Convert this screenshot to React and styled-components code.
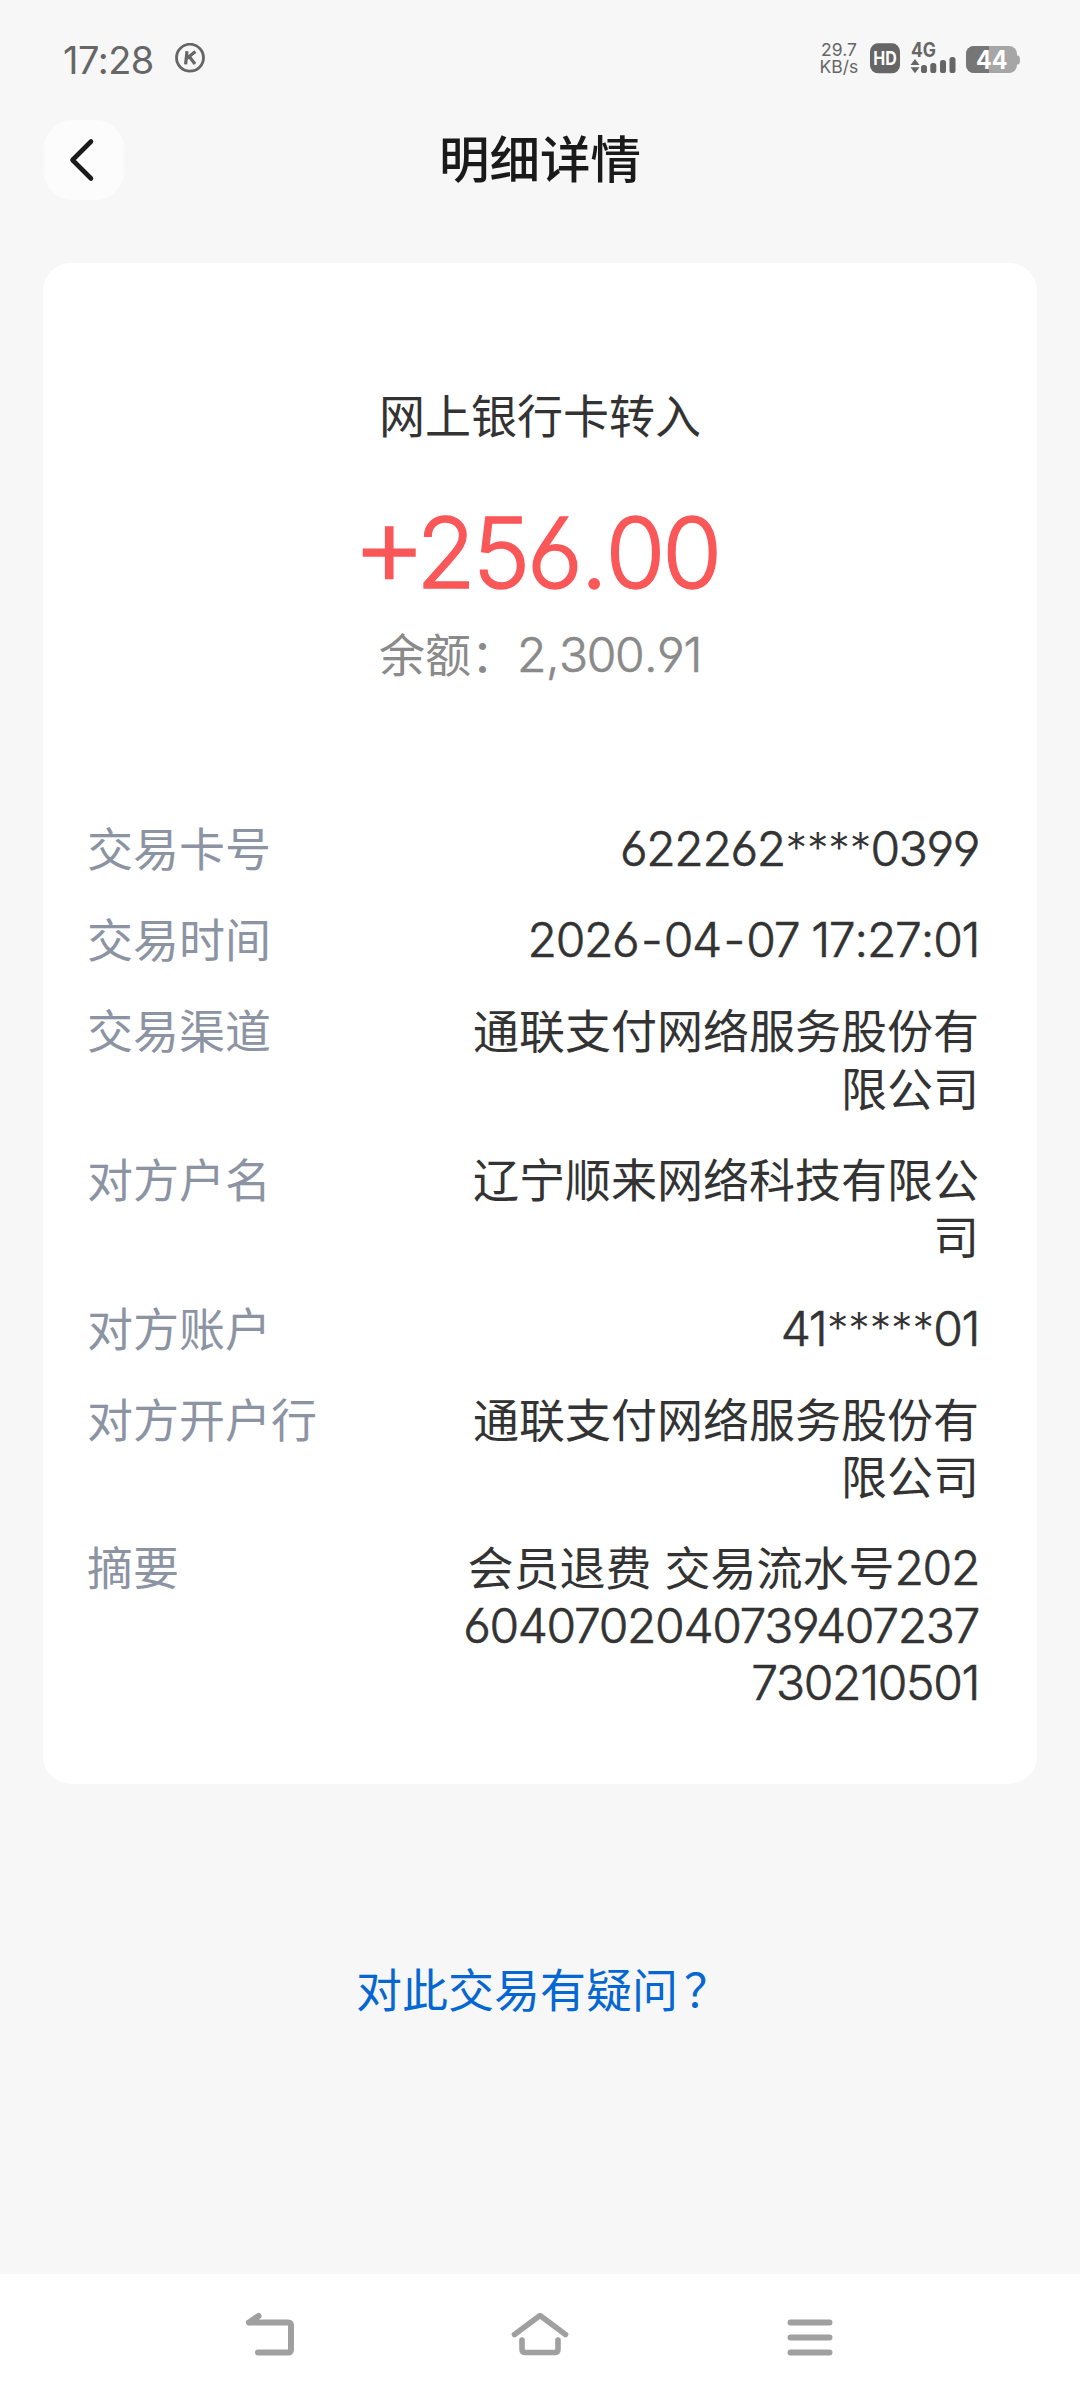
import React from 'react';
import styled, { createGlobalStyle } from 'styled-components';

const GlobalStyle = createGlobalStyle`
  * {
    box-sizing: border-box;
  }
  body {
    margin: 0;
    background: #f7f7f7;
    font-family: Inter, 'Noto Sans CJK SC', sans-serif;
  }
`;

const Screen = styled.div`
  width: 1080px;
  height: 2400px;
  display: flex;
  flex-direction: column;
  overflow: hidden;
`;

const StatusBar = styled.div`
  height: 116px;
  flex-shrink: 0;
  padding: 0 59px 0 63px;
  display: flex;
  align-items: center;
  justify-content: space-between;
  color: #666;
`;

const StatusGroup = styled.div`
  display: flex;
  align-items: center;
`;

const Clock = styled.span`
  width: 112px;
  margin-top: 4px;
  font-size: 38px;
  line-height: 44px;
  letter-spacing: -0.5px;
  white-space: nowrap;
`;

const NetSpeed = styled.div`
  width: 50px;
  margin-right: 5px;
  display: flex;
  flex-direction: column;
  align-items: center;
  font-size: 17.5px;
  line-height: 17px;
`;

const StatusSvg = styled.svg`
  overflow: visible;
`;

const Header = styled.header`
  height: 88px;
  flex-shrink: 0;
  padding: 0 44px;
  display: grid;
  grid-template-columns: 80px 1fr 80px;
  align-items: center;
`;

const BackButton = styled.button`
  width: 80px;
  height: 80px;
  padding: 0;
  border: none;
  border-radius: 28px;
  background: #fcfcfc;
  cursor: pointer;
`;

const Title = styled.h1`
  margin: 0;
  text-align: center;
  font-size: 50.5px;
  font-weight: 500;
  line-height: 72px;
  color: #1a1a1a;
`;

const Card = styled.main`
  flex-shrink: 0;
  margin: 59px 43px 0;
  height: 1521px;
  padding: 125px 58px 0 44px;
  border-radius: 28px;
  background: #fff;
`;

const Summary = styled.section`
  margin-left: 14px;
  display: flex;
  flex-direction: column;
  align-items: center;
`;

const Kind = styled.div`
  font-size: 46px;
  line-height: 56px;
  color: #333;
`;

const Amount = styled.div`
  height: 120px;
  margin: 43px 9px 0 0;
  font-size: 97px;
  font-weight: 300;
  line-height: 120px;
  letter-spacing: -3.2px;
  color: #fa5759;
  font-feature-settings: 'cv03', 'cv04';
  -webkit-text-stroke: 1.5px currentColor;
`;

const Sign = styled.span`
  margin-right: -7px;
  font-size: 114px;
  line-height: 1;
  vertical-align: 3px;
`;

const Balance = styled.div`
  margin-top: 20px;
  font-size: 46px;
  line-height: 56px;
  color: #8a8a8a;
`;

const Digits = styled.span`
  font-size: 48px;
  font-weight: 300;
  line-height: 1;
  letter-spacing: -1.35px;
  font-feature-settings: 'cv03', 'cv04';
  -webkit-text-stroke: 0.6px currentColor;
`;

const Mark = styled.span`
  margin: 0 ${({ $gap }) => $gap}px;
`;

// masked characters are smaller and thinner than the figures
const Star = styled.span`
  margin: 0 0.6px;
  font-size: 43px;
  line-height: 1;
  vertical-align: 2px;
  -webkit-text-stroke: 0;
`;

// full-width question mark sits slightly right of the font's own position
const WideMark = styled.span`
  margin-left: ${({ $shift }) => $shift}px;
  margin-right: -${({ $shift }) => $shift}px;
`;

const Details = styled.dl`
  margin: 138px 0 0;
  display: flex;
  flex-direction: column;
  gap: 33.8px;
`;

const DetailRow = styled.div`
  display: flex;
  justify-content: space-between;
  font-size: 46px;
  line-height: 57.4px;
`;

const Label = styled.dt`
  color: #8c94a3;
`;

const Value = styled.dd`
  margin: 0;
  color: #333;
  text-align: right;
`;

const Line = styled.div`
  height: 57.4px;
  white-space: nowrap;
`;

const Question = styled.a`
  margin-top: 178px;
  text-align: center;
  font-size: 46px;
  line-height: 56px;
  color: #0467d2;
`;

const NavBar = styled.nav`
  height: 126px;
  flex-shrink: 0;
  margin-top: auto;
  padding: 0 135px 6px;
  display: grid;
  grid-template-columns: repeat(3, 1fr);
  justify-items: center;
  align-items: center;
  background: #fff;
`;

const rows = [
  { label: '交易卡号', lines: ['622262****0399'] },
  { label: '交易时间', lines: ['2026-04-07 17:27:01'] },
  { label: '交易渠道', lines: ['通联支付网络服务股份有', '限公司'] },
  { label: '对方户名', lines: ['辽宁顺来网络科技有限公', '司'] },
  { label: '对方账户', lines: ['41*****01'] },
  { label: '对方开户行', lines: ['通联支付网络服务股份有', '限公司'] },
  { label: '摘要', lines: ['会员退费 交易流水号202', '6040702040739407237', '730210501'] },
];

const gaps = {
  '-': 2.5, ':': 0.2, '.': 0.8, ',': 0.8,
};

/* eslint-disable react/no-array-index-key */
function Figures({ text }) {
  return text.split(/([-:.,*])/).map((part, i) => {
    if (part === '*') return <Star key={i}>*</Star>;
    return gaps[part] ? <Mark key={i} $gap={gaps[part]}>{part}</Mark> : part;
  });
}

// latin runs are set a little larger than the chinese text around them
function MixedText({ text }) {
  return text.split(/(\d[\d*:\- ]*)/).filter(Boolean).map((part) => (
    /^\d/.test(part) ? <Digits key={part}><Figures text={part} /></Digits> : part
  ));
}

function Detail({ label, lines }) {
  return (
    <DetailRow>
      <Label>{label}</Label>
      <Value>
        {lines.map((line) => (
          <Line key={line}><MixedText text={line} /></Line>
        ))}
      </Value>
    </DetailRow>
  );
}

function AppBadge() {
  return (
    <svg width="30" height="30" viewBox="0 0 30 30">
      <circle cx="15" cy="14.7" r="13.5" fill="none" stroke="#666" strokeWidth="2.8" />
      <path d="M12 8.2L10.6 21.4M20.4 8.6L12 15.3M14.2 13.6L20 21" fill="none" stroke="#666" strokeWidth="3.2" />
    </svg>
  );
}

function StatusIcons() {
  return (
    <StatusSvg width="152" height="32" viewBox="0 0 152 32" fontFamily="Inter, sans-serif" fontWeight="700">
      <rect x="1" y="1.3" width="30" height="30" rx="8" fill="#666" />
      <text x="4.2" y="22.8" fontSize="18.5" textLength="23.5" lengthAdjust="spacingAndGlyphs" fill="#fff">HD</text>
      <text x="42" y="15.3" fontSize="19.5" textLength="25" lengthAdjust="spacingAndGlyphs" fill="#666">4G</text>
      <path d="M41.5 23L46 17L50.5 23ZM41.5 25.3L46 31.3L50.5 25.3Z" fill="#666" />
      <rect x="52" y="23" width="6" height="8" rx="2.6" fill="#666" />
      <rect x="61.3" y="21" width="6" height="10" rx="2.6" fill="#666" />
      <rect x="71" y="18" width="6" height="13" rx="2.6" fill="#666" />
      <rect x="80.5" y="15" width="6" height="16" rx="2.6" fill="#666" />
      <path d="M147 13.5h1.5q2.5 0 2.5 4.5t-2.5 4.5h-1.5z" fill="#a6a6a6" />
      <rect x="97" y="4" width="51" height="27" rx="8" fill="#a6a6a6" />
      <path d="M120 4h-15a8 8 0 0 0-8 8v11a8 8 0 0 0 8 8h15z" fill="#767676" />
      <text x="107" y="26.6" fontSize="25" textLength="31.5" lengthAdjust="spacingAndGlyphs" fill="#fff">44</text>
    </StatusSvg>
  );
}

export default function App() {
  return (
    <>
      <GlobalStyle />
      <Screen>
        <StatusBar>
          <StatusGroup>
            <Clock>17:28</Clock>
            <AppBadge />
          </StatusGroup>
          <StatusGroup>
            <NetSpeed>
              <span>29.7</span>
              <span>KB/s</span>
            </NetSpeed>
            <StatusIcons />
          </StatusGroup>
        </StatusBar>
        <Header>
          <BackButton aria-label="返回">
            <svg width="80" height="80" viewBox="0 0 80 80">
              <path d="M47 21.5L28.5 40L47 58.5" fill="none" stroke="#1a1a1a" strokeWidth="4.6" strokeLinecap="round" strokeLinejoin="round" />
            </svg>
          </BackButton>
          <Title>明细详情</Title>
        </Header>
        <Card>
          <Summary>
            <Kind>网上银行卡转入</Kind>
            <Amount>
              <Sign>+</Sign>
              <Figures text="256.00" />
            </Amount>
            <Balance>
              余额：
              <Digits><Figures text="2,300.91" /></Digits>
            </Balance>
          </Summary>
          <Details>
            {rows.map((row) => (
              <Detail key={row.label} label={row.label} lines={row.lines} />
            ))}
          </Details>
        </Card>
        <Question>
          对此交易有疑问
          <WideMark $shift={6}>？</WideMark>
        </Question>
        <NavBar>
          <svg width="60" height="60" viewBox="0 0 60 60" fill="none" stroke="#a0a0a0" strokeWidth="6" strokeLinecap="round" strokeLinejoin="round">
            <path d="M18.5 12L9 18.5M9 18.5H48Q51 18.5 51 21.5V45.5Q51 48.5 48 48.5H18" />
          </svg>
          <svg width="60" height="60" viewBox="0 0 60 60" fill="none" stroke="#a0a0a0" strokeWidth="5.6" strokeLinecap="round" strokeLinejoin="round">
            <path d="M4.5 30.5L30 11.5L55.5 30.5M12 36V45Q12 48.5 15.5 48.5H44.5Q48 48.5 48 45V36" />
          </svg>
          <svg width="60" height="60" viewBox="0 0 60 60" fill="none" stroke="#a0a0a0" strokeWidth="6" strokeLinecap="round">
            <path d="M10.5 18.5H49.5M10.5 33.5H49.5M10.5 48.5H49.5" />
          </svg>
        </NavBar>
      </Screen>
    </>
  );
}
